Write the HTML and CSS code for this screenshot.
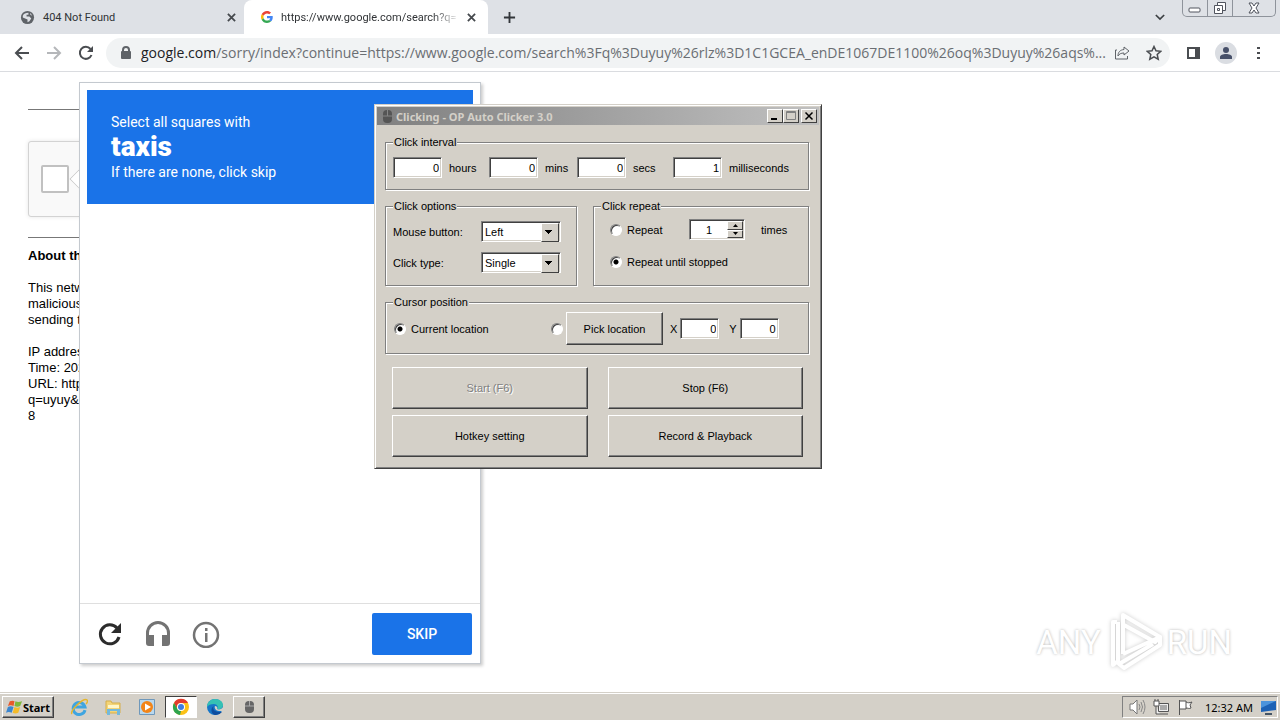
FILE: index.html
```html
<!DOCTYPE html>
<html lang="en">
<head>
    <meta charset="UTF-8">
    <meta name="viewport" content="width=device-width, initial-scale=1.0">
    <title>Auto Clicker</title>
    <link rel="stylesheet" href="styles.css">
</head>
<body>

    <!-- Browser tabs -->
    <header class="tabs">
        <div class="tab">
            <svg class="favicon" viewBox="0 0 16 16"><circle cx="8" cy="8" r="7" fill="#5f6368"/><path d="M3 6c1-2 3-3 6-3v2H7v2h3l2 2-2 3-2 1v-3l-5-2zM11 3l2 3-2-1z" fill="#dee1e6"/></svg>
            <span class="tab-title">404 Not Found</span>
            <button class="tab-close" aria-label="Close tab"><svg viewBox="0 0 10 10"><path d="M1 1l8 8M9 1L1 9" stroke="#45494d" stroke-width="2"/></svg></button>
        </div>
        <div class="tab active">
            <svg class="favicon" viewBox="0 0 48 48"><path fill="#ea4335" d="M24 9.500c3.540 0 6.710 1.220 9.210 3.600l6.850-6.850C35.900 2.380 30.470 0 24 0 14.620 0 6.510 5.380 2.560 13.220l7.980 6.190C12.430 13.720 17.740 9.500 24 9.500z"/><path fill="#4285f4" d="M46.980 24.550c0-1.570-.15-3.090-.38-4.550H24v9.020h12.940c-.58 2.960-2.260 5.480-4.780 7.180l7.730 6c4.510-4.180 7.090-10.360 7.090-17.650z"/><path fill="#fbbc05" d="M10.530 28.590c-.48-1.450-.76-2.990-.76-4.590s.27-3.140.76-4.590l-7.980-6.190C.92 16.460 0 20.120 0 24s.92 7.540 2.560 10.780z"/><path fill="#34a853" d="M24 48c6.480 0 11.930-2.130 15.890-5.810l-7.730-6c-2.150 1.450-4.920 2.300-8.160 2.300-6.260 0-11.570-4.220-13.470-9.910l-7.980 6.190C6.510 42.620 14.620 48 24 48z"/></svg>
            <span class="tab-title">https://www.google.com/search?q=</span>
            <button class="tab-close" aria-label="Close tab"><svg viewBox="0 0 10 10"><path d="M1 1l8 8M9 1L1 9" stroke="#45494d" stroke-width="2"/></svg></button>
        </div>
        <button class="tab-new" aria-label="New tab"><svg viewBox="0 0 14 14"><path d="M7 1v12M1 7h12" stroke="#33363a" stroke-width="2"/></svg></button>
        <button class="tab-search" aria-label="Search tabs"><svg viewBox="0 0 12 8"><path d="M1 1l5 5 5-5" stroke="#3c4043" stroke-width="2" fill="none"/></svg></button>
        <div class="window-buttons">
            <button aria-label="Minimize"><svg viewBox="0 0 24 16"><rect x="6" y="8" width="11" height="4" rx="1" fill="#fff" stroke="#50545e"/></svg></button>
            <button aria-label="Restore"><svg viewBox="0 0 24 16"><path d="M9.500 2.500h8v8h-8z" fill="#fff" stroke="#50545e"/><path d="M6.500 5.500h8v8h-8zM9.500 8.500h2v2h-2z" fill="#fff" stroke="#50545e"/></svg></button>
            <button class="wide" aria-label="Close window"><svg viewBox="0 0 24 16"><path d="M7 3h3l2 3 2-3h3l-3 5 3 5h-3l-2-3-2 3H7l3-5z" fill="#fff" stroke="#50545e"/></svg></button>
        </div>
    </header>

    <!-- Address bar -->
    <nav class="toolbar">
        <button aria-label="Back"><svg viewBox="0 0 16 16"><path d="M15 8H2M8 2L2 8l6 6" stroke="#4a4d51" stroke-width="2" fill="none"/></svg></button>
        <button aria-label="Forward"><svg viewBox="0 0 16 16"><path d="M1 8h13M8 2l6 6-6 6" stroke="#b5b7ba" stroke-width="2" fill="none"/></svg></button>
        <button aria-label="Reload"><svg viewBox="0 0 16 16"><path d="M13.500 10a6 6 0 1 1-1-6" stroke="#4a4d51" stroke-width="2" fill="none"/><path d="M15 1v6H9z" fill="#4a4d51"/></svg></button>
        <div class="address">
            <svg class="lock" viewBox="0 0 10 14"><path d="M2 6V4a3 3 0 0 1 6 0v2" stroke="#5f6368" stroke-width="2" fill="none"/><rect y="5" width="10" height="8" rx="1" fill="#5f6368"/></svg>
            <p class="url"><b>google.com</b>/sorry/index?continue=https://www.google.com/search%3Fq%3Duyuy%26rlz%3D1C1GCEA_enDE1067DE1100%26oq%3Duyuy%26aqs%...</p>
            <button aria-label="Share"><svg viewBox="0 0 16 16"><path d="M3 5H1.500v9h12v-3" stroke="#5f6368" fill="none"/><path d="M10 2l5 4-5 4V8C7 8 5 9 4 11c0-4 2-6 6-6.500z" stroke="#5f6368" fill="none"/></svg></button>
            <button aria-label="Bookmark"><svg viewBox="0 0 16 16"><path d="M8 1.500l2 4.300 4.700.5-3.500 3.200 1 4.700L8 11.800l-4.200 2.400 1-4.700L1.300 6.300l4.700-.5z" stroke="#4a4d51" stroke-width="1.500" fill="none"/></svg></button>
        </div>
        <button aria-label="Side panel"><svg viewBox="0 0 16 16"><path d="M2 3h11v10H2z" stroke="#4a4d51" stroke-width="2" fill="none"/><path d="M9 2h5v12H9z" fill="#4a4d51"/></svg></button>
        <button class="avatar" aria-label="Profile"><svg viewBox="0 0 16 16"><circle cx="8" cy="5" r="3" fill="#475069"/><path d="M2 14v-2c0-2 3-3 6-3s6 1 6 3v2z" fill="#475069"/></svg></button>
        <button aria-label="Menu"><svg viewBox="0 0 16 16"><path d="M7 2h3v2H7zM7 7h3v2H7zM7 12h3v2H7z" fill="#4a4d51"/></svg></button>
    </nav>

    <main class="page">
        <div class="sorry">
            <hr>
            <div class="recaptcha"><input type="checkbox" aria-label="I'm not a robot"></div>
            <hr>
            <b>About this page</b>
            <p>This network<br>malicious<br>sending the</p>
            <p>IP address:<br>Time: 2023<br>URL: https:<br>q=uyuy&amp;rlz<br>8</p>
        </div>

        <!-- Challenge popup -->
        <section class="challenge">
            <div class="challenge-head">
                Select all squares with
                <strong>taxis</strong>
                If there are none, click skip
            </div>
            <div class="challenge-foot">
                <button aria-label="New challenge"><svg viewBox="0 0 28 28"><path d="M23 17a9.500 9.500 0 1 1-2-9" stroke="#2c2c2c" stroke-width="3" fill="none"/><path d="M25 3v10H15z" fill="#2c2c2c"/></svg></button>
                <button aria-label="Audio challenge"><svg viewBox="0 0 28 28"><path d="M3.500 18v-5a10.500 10.500 0 0 1 21 0v5" stroke="#737373" stroke-width="3" fill="none"/><path d="M2 15h8v11H5a3 3 0 0 1-3-3zM18 15h8v8a3 3 0 0 1-3 3h-5z" fill="#737373"/></svg></button>
                <button aria-label="Help"><svg viewBox="0 0 28 28"><circle cx="14" cy="15" r="12" stroke="#737373" stroke-width="2.500" fill="none"/><path d="M13 8h2.500v3H13zM13 13h2.500v9H13z" fill="#737373"/></svg></button>
                <button class="skip">SKIP</button>
            </div>
            <span class="pointer"></span>
        </section>

        <div class="watermark">
            <span>ANY</span>
            <svg viewBox="0 0 60 64"><g fill="none" stroke="#fff" stroke-width="4" stroke-linejoin="round"><path d="M19 44V5l37 22-5 5L20 15"/><path d="M19 44l37-17v8L20 58l-5-4 34-20M13 12H9v43l5-4V12"/></g></svg>
            <span>RUN</span>
        </div>
    </main>

    <!-- Clicker window -->
    <form class="window">
        <div class="titlebar">
            <svg viewBox="0 0 12 16"><rect x="2" y="2" width="9" height="13" rx="4" fill="#555"/><path d="M6.500 2v6M2 8h9" stroke="#858585"/></svg>
            <h1>Clicking - OP Auto Clicker 3.0</h1>
            <button type="button" aria-label="Minimize"><svg viewBox="0 0 12 10"><path d="M2 7h6v2H2z"/></svg></button>
            <button type="button" aria-label="Maximize" disabled><svg viewBox="0 0 12 10"><path d="M1.500.5h9v8h-9zM1 1.500h9" stroke="#808080" fill="none"/></svg></button>
            <button type="button" class="last" aria-label="Close"><svg viewBox="0 0 12 10"><path d="M2.500 1.500l7 7M9.500 1.500l-7 7" stroke="#000" stroke-width="1.500"/></svg></button>
        </div>
        <div class="window-body">
            <fieldset>
                <legend>Click interval</legend>
                <div class="interval">
                    <label><input class="field" type="text" value="0"> hours</label>
                    <label><input class="field" type="text" value="0"> mins</label>
                    <label><input class="field" type="text" value="0"> secs</label>
                    <label><input class="field" type="text" value="1"> milliseconds</label>
                </div>
            </fieldset>
            <div class="columns">
                <fieldset>
                    <legend>Click options</legend>
                    <div class="options">
                        <label for="mouse">Mouse button:</label>
                        <span class="combo"><select id="mouse"><option>Left</option></select></span>
                        <label for="type">Click type:</label>
                        <span class="combo"><select id="type"><option>Single</option></select></span>
                    </div>
                </fieldset>
                <fieldset>
                    <legend>Click repeat</legend>
                    <div class="repeat">
                        <label><input type="radio" name="repeat"> Repeat</label>
                        <span class="spinner">
                            <input type="text" value="1" aria-label="Repeat count">
                            <span class="steps">
                                <button type="button" aria-label="More"><svg viewBox="0 0 5 3"><path d="M0 3h5L2.500 0z"/></svg></button>
                                <button type="button" aria-label="Less"><svg viewBox="0 0 5 3"><path d="M0 0h5L2.500 3z"/></svg></button>
                            </span>
                        </span>
                        <span class="times">times</span>
                        <label class="full"><input type="radio" name="repeat" checked> Repeat until stopped</label>
                    </div>
                </fieldset>
            </div>
            <fieldset>
                <legend>Cursor position</legend>
                <div class="cursor">
                    <label class="current"><input type="radio" name="cursor" checked> Current location</label>
                    <input type="radio" name="cursor" aria-label="Picked location">
                    <button type="button" class="btn pick">Pick location</button>
                    <label class="coord">X <input class="field" type="text" value="0"></label>
                    <label class="coord">Y <input class="field" type="text" value="0"></label>
                </div>
            </fieldset>
            <div class="actions">
                <button type="button" class="btn" disabled>Start (F6)</button>
                <button type="button" class="btn">Stop (F6)</button>
                <button type="button" class="btn">Hotkey setting</button>
                <button type="button" class="btn">Record &amp; Playback</button>
            </div>
        </div>
    </form>

    <!-- Taskbar -->
    <footer class="taskbar">
        <button class="start">
            <svg viewBox="0 0 18 16"><path d="M4 2c2-1 4-1 5 0L8 7C6 6 4 6 2 7z" fill="#e8592b"/><path d="M10 2c2 1 4 1 7 0l-2 5c-2 1-4 1-6 0z" fill="#7db83a"/><path d="M2 8c2-1 4-1 6 0l-2 6c-2-1-4-1-6 0z" fill="#3b86cf"/><path d="M9 8c2 1 4 1 6 0l-2 6c-2 1-4 1-6 0z" fill="#f4bb29"/></svg>
            Start
        </button>
        <button class="task" aria-label="Internet Explorer"><svg viewBox="0 0 18 18"><path d="M15 12a6 6 0 1 1 0-3H5" stroke="#3fa5e0" stroke-width="3" fill="none"/><path d="M2 16C-1 13 14-1 17 2c1 1 0 3-1 4" stroke="#e5b62c" stroke-width="1.500" fill="none"/></svg></button>
        <button class="task" aria-label="Explorer"><svg viewBox="0 0 18 18"><path d="M2 3h5l1 2h8v10H2z" fill="#f3d477" stroke="#d5ae4a"/><path d="M4 7h11v3H4z" fill="#fff6c9"/><path d="M3 17v-6h13v6h-3v-4H6v4z" fill="#73b9dc"/></svg></button>
        <button class="task" aria-label="Media Player"><svg viewBox="0 0 18 18"><path d="M1.500 1.500h15v15h-15z" fill="#b9d8ee" stroke="#6f98bb"/><circle cx="9" cy="9" r="6" fill="#f28519"/><path d="M7 5.500v7l6-3.500z" fill="#fff"/></svg></button>
        <button class="task pressed" aria-label="Chrome"><svg viewBox="0 0 18 18"><circle cx="9" cy="9" r="8" fill="#fbc116"/><path d="M2 5a8 8 0 0 1 14 0H9a4 4 0 0 0-3.500 6z" fill="#e33b2e"/><path d="M2 5l3.500 6A4 4 0 0 0 9 13l-1 4A8 8 0 0 1 2 5z" fill="#2da44e"/><circle cx="9" cy="9" r="4" fill="#fff"/><circle cx="9" cy="9" r="3" fill="#3d7de0"/></svg></button>
        <button class="task" aria-label="Edge"><svg viewBox="0 0 18 18"><circle cx="9" cy="9" r="8" fill="#1676c8"/><path d="M1 9C1 4 5 1 9 1c5 0 8 3 8 6s-3 5-6 4c2-2 0-5-3-5-3 0-6 1-7 3z" fill="#35c1b4"/><path d="M8 8c-2 2 0 6 5 6h3a8 8 0 0 1-7 3c-4-1-5-7-1-9z" fill="#0f4d9e"/><path d="M9 8c-1 2 1 5 4 5h4V9c-1 2-4 3-6 2 1-1 0-3-2-3z" fill="#d4d0c8"/></svg></button>
        <button class="task raised" aria-label="Auto Clicker"><svg viewBox="0 0 18 18"><rect x="5" y="3" width="9" height="12" rx="4" fill="#666"/><path d="M9.500 3v5M5 8h9" stroke="#aaa"/></svg></button>
        <div class="tray">
            <svg viewBox="0 0 18 18"><path d="M2 6h3l4-4v14l-4-4H2z" fill="#fff" stroke="#777"/><path d="M11 6q2 3 0 6M13 4q3 5 0 10M15 2q4 7 0 14" stroke="#888" fill="none"/></svg>
            <svg viewBox="0 0 18 18"><path d="M6.500 5.500h10v8h-10zM8 16h8M4 8v8h4" fill="#eee" stroke="#555"/><path d="M8 7h7v5H8z" fill="#aaa"/><path d="M2 3h5v5H2zM3 3V1M6 3V1" fill="#fff" stroke="#555"/></svg>
            <svg viewBox="0 0 18 18"><path d="M3.500 2v15M4 3h6v8H4M10 4c2 1 3 1 6 0l-2 3 1 3c-2 1-3 0-5 0" fill="#fff" stroke="#555"/></svg>
            <time>12:32 AM</time>
            <svg viewBox="0 0 18 18"><path d="M2 3h15v9l-15 2z" fill="#1d62b5"/><path d="M2 3h15L2 10z" fill="#4c94dc"/><path d="M6 15h7v2H6z" fill="#456"/></svg>
        </div>
    </footer>

</body>
</html>
```
FILE: styles.css
```css
* {
    box-sizing: border-box;
}

body {
    margin: 0;
    min-height: 100vh;
    display: flex;
    flex-direction: column;
    background-color: #fff;
    color: #000;
    font-family: "Liberation Sans", Arial, sans-serif;
    font-size: 11px;
    overflow: hidden;
}

button, input, select {
    font: inherit;
    color: inherit;
    margin: 0;
    padding: 0;
    border: none;
    background: none;
}

svg {
    display: block;
    flex: none;
}

p, h1 {
    margin: 0;
}

/* Tabs */
.tabs {
    display: flex;
    height: 34px;
    background-color: #dee1e6;
    font-family: Roboto, sans-serif;
    font-size: 11px;
    color: #303336;
}

.tab {
    display: flex;
    align-items: center;
    width: 244px;
    padding: 0 4px 0 20px;
    gap: 8px;
}

.tab.active {
    background-color: #fff;
    border-radius: 8px 8px 0 0;
    padding: 0 8px 0 17px;
}

.favicon {
    width: 15px;
    height: 15px;
}

.tab.active .favicon {
    width: 12px;
    height: 12px;
}

.tab-title {
    flex: 1;
    white-space: nowrap;
}

.tab.active .tab-title {
    -webkit-mask-image: linear-gradient(to right, #000 85%, transparent);
    mask-image: linear-gradient(to right, #000 85%, transparent);
}

.tab-close svg {
    width: 9px;
    height: 9px;
}

.tab-close {
    padding: 0 4px 0 0;
}

.tab-new {
    padding: 0 15px;
}

.tab-new svg {
    width: 13px;
    height: 13px;
}

.tab-search {
    margin-left: auto;
    padding: 0 17px 0 0;
}

.tab-search svg {
    width: 10px;
    height: 7px;
}

.window-buttons {
    display: flex;
    height: 17px;
    margin-right: 4px;
    border: 1px solid #8e939b;
    border-top: none;
    border-radius: 0 0 5px 5px;
}

.window-buttons button {
    width: 25px;
    border-right: 1px solid #8e939b;
}

.window-buttons .wide {
    width: 42px;
    border: none;
}

.window-buttons svg {
    width: 24px;
    height: 16px;
    margin: 0 auto;
}

/* Toolbar */
.toolbar {
    display: flex;
    align-items: center;
    height: 38px;
    padding: 0 14px;
    gap: 16px;
    border-bottom: 1px solid #dadce0;
}

.toolbar svg {
    width: 16px;
    height: 16px;
}

.address {
    display: flex;
    align-items: center;
    flex: 1;
    min-width: 0;
    height: 30px;
    margin-left: -4px;
    padding: 0 8px 0 15px;
    gap: 16px;
    border-radius: 15px;
    background-color: #f1f3f4;
}

.address .lock {
    width: 10px;
    height: 14px;
    margin-right: -6px;
}

.url {
    flex: 1;
    min-width: 0;
    white-space: nowrap;
    font-family: "Open Sans", sans-serif;
    font-size: 14px;
    color: #6a6e73;
}

.url b {
    font-weight: normal;
    color: #202124;
}

.avatar {
    margin: 0 -3px;
    padding: 3px;
    border-radius: 50%;
    background-color: #dadde2;
}

/* Page */
.page {
    position: relative;
    flex: 1;
}

.sorry {
    width: 400px;
    padding: 37px 0 0 28px;
    font-size: 13px;
    line-height: 16px;
}

.sorry hr {
    margin: 0;
    border: none;
    border-top: 1px solid #777;
}

.sorry p {
    margin: 16px 0;
}

.sorry b {
    display: block;
    margin-top: 10px;
}

.recaptcha {
    display: flex;
    align-items: center;
    width: 304px;
    height: 76px;
    margin: 31px 0 20px;
    padding-left: 12px;
    border: 1px solid #d3d3d3;
    border-radius: 3px;
    background-color: #f9f9f9;
    box-shadow: 0 0 4px rgba(0,0,0,0.1);
}

.recaptcha input {
    appearance: none;
    width: 28px;
    height: 28px;
    border: 2px solid #c1c1c1;
    border-radius: 2px;
    background-color: #fff;
}

.challenge {
    position: absolute;
    left: 79px;
    top: 10px;
    bottom: 28px;
    width: 402px;
    display: flex;
    flex-direction: column;
    justify-content: space-between;
    border: 1px solid #c4c9cf;
    background-color: #fff;
    box-shadow: 2px 2px 3px rgba(0,0,0,0.2);
    font-family: Roboto, sans-serif;
}

.challenge-head {
    margin: 7px;
    padding: 24px;
    background-color: #1a73e8;
    color: #fff;
    font-size: 14px;
    line-height: 16px;
}

.challenge-head strong {
    display: block;
    font-size: 28px;
    font-weight: 900;
    line-height: 34px;
}

.challenge-foot {
    display: flex;
    align-items: center;
    height: 60px;
    padding: 0 8px 0 16px;
    gap: 20px;
    border-top: 1px solid #dfdfdf;
}

.challenge-foot svg {
    width: 28px;
    height: 28px;
}

.skip {
    width: 100px;
    height: 42px;
    margin-left: auto;
    border-radius: 2px;
    background-color: #1a73e8;
    color: #fff;
    font-size: 14px;
    font-weight: 500;
}

.pointer {
    position: absolute;
    left: -8px;
    top: 89px;
    width: 14px;
    height: 14px;
    transform: rotate(45deg);
    border: 1px solid #ccc;
    border-width: 0 0 1px 1px;
    background-color: #fff;
    clip-path: polygon(0 0, 100% 100%, 0 100%);
}

.watermark {
    position: absolute;
    right: 48px;
    bottom: 18px;
    display: flex;
    align-items: center;
    gap: 3px;
    color: #fff;
    font-family: Roboto, sans-serif;
    font-size: 33px;
    text-shadow: 0 0 3px rgba(0,0,0,0.3);
}

.watermark svg {
    width: 60px;
    height: 64px;
    filter: drop-shadow(0 0 2px rgba(0,0,0,0.2));
}

/* Clicker window */
.window {
    position: absolute;
    left: 374px;
    top: 104px;
    width: 448px;
    padding: 2px 1px;
    border: 1px solid #d4d0c8;
    border-right-color: #404040;
    border-bottom-color: #404040;
    background-color: #d4d0c8;
    box-shadow: inset 1px 1px #fff, inset -1px -1px #808080;
}

.titlebar {
    display: flex;
    align-items: center;
    height: 18px;
    margin: 0 1px;
    padding: 0 2px 0 4px;
    background: linear-gradient(to right, #808080, #c0c0c0);
    color: #d4d0c8;
}

.titlebar h1 {
    flex: 1;
    margin-left: 3px;
    font-family: "Noto Sans", sans-serif;
    font-size: 11px;
}

.titlebar > svg {
    width: 12px;
    height: 16px;
}

.titlebar button {
    width: 16px;
    height: 14px;
    border: 1px solid #fff;
    border-right-color: #404040;
    border-bottom-color: #404040;
    background-color: #d4d0c8;
}

.titlebar .last {
    margin-left: 2px;
}

.titlebar button svg {
    width: 12px;
    height: 10px;
    margin: 0 auto;
}

.window-body {
    display: flex;
    flex-direction: column;
    gap: 9px;
    padding: 10px 11px 9px 9px;
}

fieldset {
    min-width: 0;
    margin: 0;
    padding: 0 7px;
    border: 1px solid #808080;
    box-shadow: 1px 1px #fff, inset 1px 1px #fff;
}

legend {
    margin: 0;
    padding: 0 1px;
    line-height: 14px;
    background-color: #d4d0c8;
}

label {
    white-space: nowrap;
}

.field, .combo, .spinner {
    border: 1px solid #808080;
    border-right-color: #fff;
    border-bottom-color: #fff;
    background-color: #fff;
    box-shadow: inset 1px 1px #404040, inset -1px -1px #d4d0c8;
}

.field {
    width: 49px;
    height: 21px;
    padding-right: 2px;
    text-align: right;
}

.interval {
    display: grid;
    grid-template-columns: 96px 88px 96px auto;
    padding: 8px 0 11px;
}

.interval label {
    display: flex;
    align-items: center;
    gap: 7px;
}

.columns {
    display: grid;
    grid-template-columns: 192px auto;
    gap: 16px;
}

.options {
    display: grid;
    grid-template-columns: 88px 80px;
    align-items: center;
    row-gap: 10px;
    padding: 8px 0 12px;
}

.combo {
    position: relative;
    height: 21px;
}

.combo select {
    appearance: none;
    width: 100%;
    height: 19px;
    padding-left: 3px;
}

/* arrow button */
.combo::after {
    content: "";
    position: absolute;
    right: 1px;
    top: 1px;
    width: 16px;
    height: 17px;
    border: 1px solid #fff;
    border-right-color: #404040;
    border-bottom-color: #404040;
    background: linear-gradient(#000, #000) 3px 6px / 7px 1px no-repeat,
        linear-gradient(#000, #000) 4px 7px / 5px 1px no-repeat,
        linear-gradient(#000, #000) 5px 8px / 3px 1px no-repeat,
        linear-gradient(#000, #000) 6px 9px / 1px 1px no-repeat #d4d0c8;
    pointer-events: none;
}

input[type="radio"] {
    appearance: none;
    width: 12px;
    height: 12px;
    border: 1px solid #808080;
    border-right-color: #fff;
    border-bottom-color: #fff;
    border-radius: 50%;
    background-color: #fff;
    box-shadow: inset 1px 1px #404040;
}

input[type="radio"]:checked {
    background-image: radial-gradient(#000 2px, transparent 3px);
}

.repeat {
    display: grid;
    grid-template-columns: 71px 56px auto;
    align-items: center;
    column-gap: 8px;
    row-gap: 16px;
    padding: 6px 0 14px 9px;
}

.repeat label, .current {
    display: flex;
    align-items: center;
    gap: 5px;
}

.times {
    margin-left: 8px;
}

.full {
    grid-column: 1 / -1;
}

.spinner {
    display: flex;
    height: 21px;
    padding: 1px;
}

.spinner input {
    flex: 1;
    min-width: 0;
    text-align: center;
}

.spinner .steps {
    display: flex;
    flex-direction: column;
    width: 16px;
}

.steps button {
    display: flex;
    flex: 1;
    align-items: center;
    justify-content: center;
    border: 1px solid #fff;
    border-right-color: #404040;
    border-bottom-color: #404040;
    background-color: #d4d0c8;
}

.steps svg {
    width: 5px;
    height: 3px;
}

.btn {
    height: 42px;
    border: 1px solid #fff;
    border-right-color: #404040;
    border-bottom-color: #404040;
    background-color: #d4d0c8;
    box-shadow: inset -1px -1px #808080;
}

.btn:disabled {
    color: #808080;
    text-shadow: 1px 1px #fff;
}

.cursor {
    display: flex;
    align-items: center;
    padding: 3px 0 8px 1px;
}

.current {
    width: 157px;
}

.pick {
    width: 97px;
    height: 33px;
    margin: 0 7px 0 3px;
}

.coord {
    display: flex;
    align-items: center;
    gap: 3px;
    margin-right: 10px;
}

.coord .field {
    width: 39px;
}

.actions {
    display: grid;
    grid-template-columns: 1fr 1fr;
    gap: 6px 20px;
    padding: 4px 6px 0 7px;
}

/* Taskbar */
.taskbar {
    display: flex;
    align-items: center;
    height: 28px;
    padding: 1px 2px 0;
    border-top: 1px solid #d4d0c8;
    background-color: #d4d0c8;
    box-shadow: inset 0 1px #fff;
    font-family: "Noto Sans", sans-serif;
}

.start, .task {
    display: flex;
    align-items: center;
    justify-content: center;
    height: 22px;
}

.start, .raised {
    border: 1px solid #fff;
    border-right-color: #404040;
    border-bottom-color: #404040;
    box-shadow: inset -1px -1px #808080;
}

.start {
    width: 52px;
    margin-right: 9px;
    font-weight: bold;
}

.start svg {
    width: 17px;
    height: 16px;
}

.task {
    width: 32px;
    margin-right: 2px;
}

.task svg, .tray svg {
    width: 18px;
    height: 18px;
}

.pressed {
    border: 1px solid #404040;
    border-right-color: #fff;
    border-bottom-color: #fff;
    background-color: #fff;
}

.tray {
    display: flex;
    align-items: center;
    height: 22px;
    margin-left: auto;
    padding: 0 0 0 5px;
    gap: 6px;
    border: 1px solid #808080;
    border-right-color: #fff;
    border-bottom-color: #fff;
}

.tray time {
    margin-left: 5px;
}
```
